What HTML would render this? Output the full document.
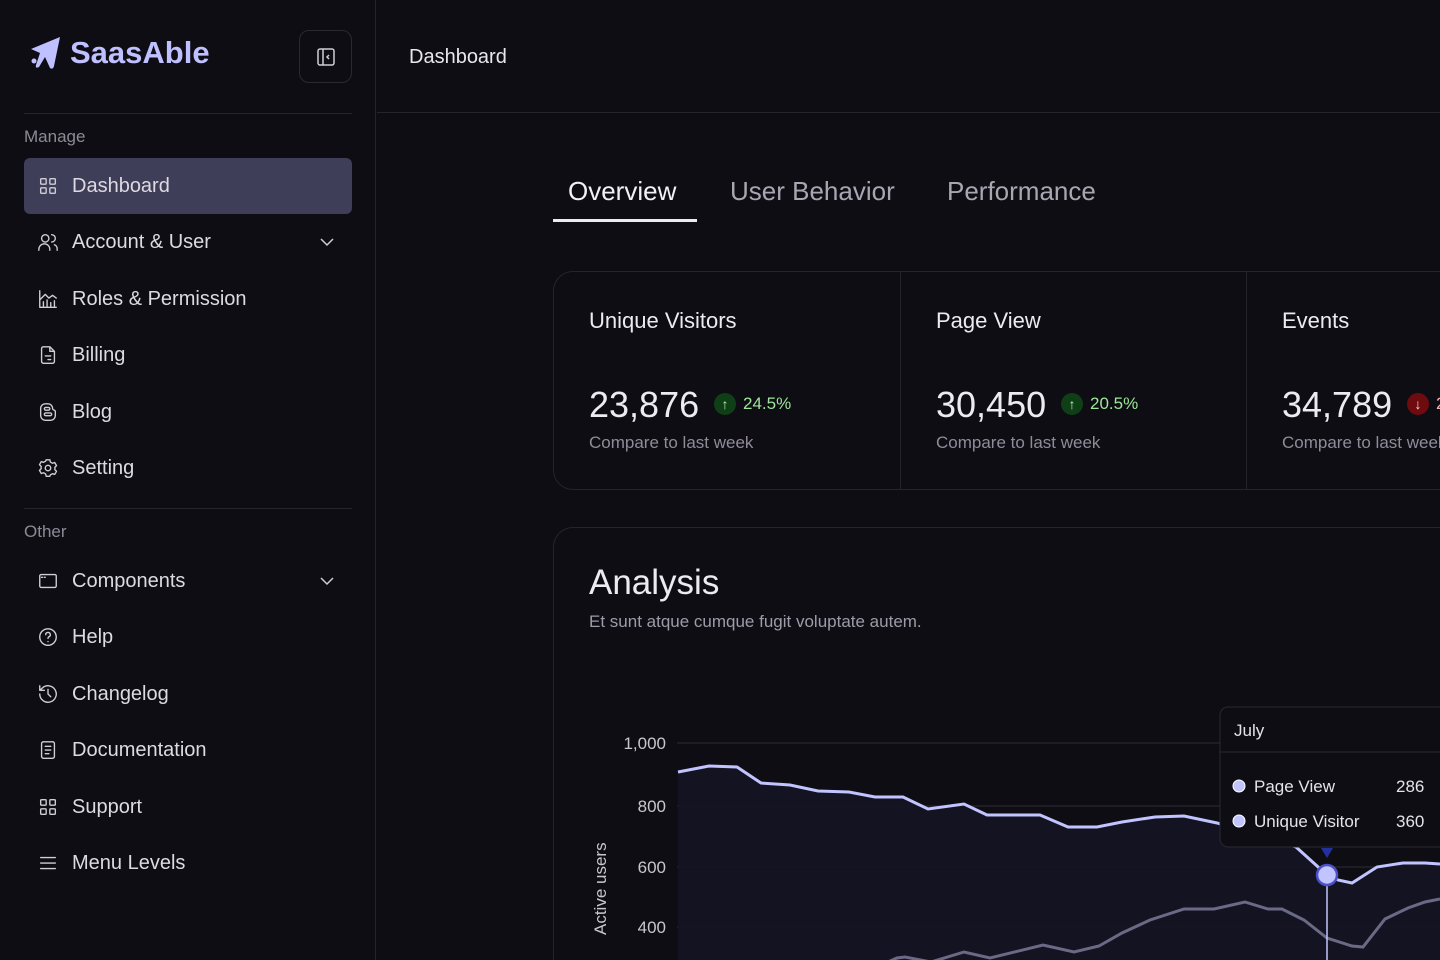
<!DOCTYPE html>
<html style="overflow:hidden;height:960px"><head><meta charset="utf-8"><style>
*{box-sizing:border-box;margin:0;padding:0}
body{width:1440px;height:960px;overflow:hidden;background:#0f0d14;font-family:"Liberation Sans",sans-serif;color:#e6e4ec;position:relative}
.sb{position:absolute;left:0;top:0;width:376px;height:960px;border-right:1px solid #25232c}
.logo{position:absolute;left:28px;top:35px;display:flex;align-items:center;gap:8px;color:#bfc0ff;font-weight:bold;font-size:31px}
.tog{position:absolute;left:299px;top:30px;width:53px;height:53px;border:1px solid #2a2831;border-radius:10px}
.hr{position:absolute;left:24px;width:328px;height:1px;background:#25232c}
.sec{position:absolute;left:24px;font-size:17px;color:#8d8a95}
.it{position:absolute;left:24px;width:328px;height:56px;border-radius:6px;display:flex;align-items:center;padding-left:13px;font-size:20px;color:#dcdae2}
.it svg.ic{width:22px;height:22px;margin-right:13px;fill:none;stroke:#cfcdd6;stroke-width:1.5;stroke-linecap:round;stroke-linejoin:round}
.it.act{background:#3f3e58}
.chev{position:absolute;left:296px;top:22px;width:14px;height:12px}
.top{position:absolute;left:377px;top:0;right:0;height:113px;border-bottom:1px solid #25232c}
.top span{position:absolute;left:32px;top:46px;font-size:20px;color:#e8e6ee}
.tab{position:absolute;top:176px;font-size:26px;color:#a9a6b2}
.card{position:absolute;left:553px;top:271px;width:920px;height:219px;border:1px solid #25232c;border-radius:20px}
.col{position:absolute;top:0;height:217px;width:346px}
.col h3{position:absolute;left:35px;top:36px;font-weight:normal;font-size:22px;color:#ecebf1}
.col .n{position:absolute;left:35px;top:112px;font-size:36px;color:#ecebf1}
.col .c{position:absolute;left:35px;top:161px;font-size:17px;color:#8f8c98}
.bdg{position:absolute;top:121px;width:22px;height:22px;border-radius:50%;display:flex;align-items:center;justify-content:center;font-size:14px}
.pct{position:absolute;top:122px;font-size:17px;color:#9ce79a}
.an{position:absolute;left:553px;top:527px;width:920px;height:433px;border:1px solid #25232c;border-bottom:none;border-radius:20px 20px 0 0;overflow:hidden}
</style></head><body>
<div class="sb">
 <div class="logo"><svg width="34" height="36" viewBox="0 0 34 36"><path d="M32 2 L3 14 L12 18 L8 30 Q7 34 11 32 L17 22 L22 33 Q25 35 26 31 Z" fill="#bfc0ff"/><circle cx="6" cy="26" r="2.5" fill="#bfc0ff"/></svg><span>SaasAble</span></div>
 <div class="tog"><svg width="53" height="53" viewBox="0 0 53 53" fill="none" stroke="#cfcdd6" stroke-width="1.5"><rect x="18" y="18" width="16" height="16" rx="2"/><path d="M23 18v16M29 24l-2 2 2 2"/></svg></div>
 <div class="hr" style="top:113px"></div>
 <div class="sec" style="top:127px">Manage</div>
 <div class="it act" style="top:158px"><svg class="ic" viewBox="0 0 24 24"><rect x="4" y="4" width="6" height="6" rx="1"/><rect x="14" y="4" width="6" height="6" rx="1"/><rect x="4" y="14" width="6" height="6" rx="1"/><rect x="14" y="14" width="6" height="6" rx="1"/></svg>Dashboard</div>
 <div class="it" style="top:214px"><svg class="ic" viewBox="0 0 24 24"><circle cx="9" cy="8" r="4"/><path d="M2 21v-1a6 6 0 0 1 12 0v1M16 4a4 4 0 0 1 0 8M19 15a5 5 0 0 1 3 5v1"/></svg>Account &amp; User<svg class="chev" viewBox="0 0 14 12" fill="none" stroke="#cfcdd6" stroke-width="1.5"><path d="M1 3l6 6 6-6"/></svg></div>
 <div class="it" style="top:271px"><svg class="ic" viewBox="0 0 24 24"><path d="M3 3v18h18M7 20v-5M11 20v-7M15 20v-4M19 20v-6M4 12l5-5 4 4 4-3 4 3"/></svg>Roles &amp; Permission</div>
 <div class="it" style="top:327px"><svg class="ic" viewBox="0 0 24 24"><path d="M14 3H7a2 2 0 0 0-2 2v14a2 2 0 0 0 2 2h10a2 2 0 0 0 2-2V8z M14 3v5h5M9 13h6M12 17h3"/></svg>Billing</div>
 <div class="it" style="top:384px"><svg class="ic" viewBox="0 0 24 24"><path d="M4 8a5 5 0 0 1 5-5h3a5 5 0 0 1 5 5 2 2 0 0 0 2 2 2 2 0 0 1 1 2v4a5 5 0 0 1-5 5H9a5 5 0 0 1-5-5z"/><rect x="8" y="7" width="6" height="3" rx="1.5"/><rect x="8" y="13" width="8" height="3" rx="1.5"/></svg>Blog</div>
 <div class="it" style="top:440px"><svg class="ic" viewBox="0 0 24 24"><circle cx="12" cy="12" r="3"/><path d="M10 3h4l.6 2.5 2.3 1.3 2.4-.8 2 3.4-1.8 1.8v2.6l1.8 1.8-2 3.4-2.4-.8-2.3 1.3L14 21h-4l-.6-2.5-2.3-1.3-2.4.8-2-3.4 1.8-1.8v-2.6L2.7 8.4l2-3.4 2.4.8 2.3-1.3z"/></svg>Setting</div>
 <div class="hr" style="top:508px"></div>
 <div class="sec" style="top:522px">Other</div>
 <div class="it" style="top:553px"><svg class="ic" viewBox="0 0 24 24"><rect x="3" y="5" width="18" height="14" rx="1.5"/><path d="M5 8h1M8 8h1"/></svg>Components<svg class="chev" viewBox="0 0 14 12" fill="none" stroke="#cfcdd6" stroke-width="1.5"><path d="M1 3l6 6 6-6"/></svg></div>
 <div class="it" style="top:609px"><svg class="ic" viewBox="0 0 24 24"><circle cx="12" cy="12" r="9"/><path d="M9.5 9.5a2.5 2.5 0 1 1 3.5 2.3c-.7.3-1 .9-1 1.7M12 17v.1"/></svg>Help</div>
 <div class="it" style="top:666px"><svg class="ic" viewBox="0 0 24 24"><path d="M3 12a9 9 0 1 0 3-6.7L3 8M3 3v5h5M12 7v5l3 3"/></svg>Changelog</div>
 <div class="it" style="top:722px"><svg class="ic" viewBox="0 0 24 24"><rect x="5" y="3" width="14" height="18" rx="2"/><path d="M9 8h6M9 12h6M9 16h4"/></svg>Documentation</div>
 <div class="it" style="top:779px"><svg class="ic" viewBox="0 0 24 24"><rect x="4" y="4" width="6" height="6" rx="1"/><rect x="14" y="4" width="6" height="6" rx="1"/><rect x="4" y="14" width="6" height="6" rx="1"/><rect x="14" y="14" width="6" height="6" rx="1"/></svg>Support</div>
 <div class="it" style="top:835px"><svg class="ic" viewBox="0 0 24 24"><path d="M4 6h16M4 12h16M4 18h16"/></svg>Menu Levels</div>
</div>
<div class="top"><span>Dashboard</span></div>
<div class="tab" style="left:568px;color:#f1f0f5">Overview</div>
<div style="position:absolute;left:553px;top:219px;width:144px;height:3px;background:#ecebf1"></div>
<div class="tab" style="left:730px">User Behavior</div>
<div class="tab" style="left:947px">Performance</div>
<div class="card">
 <div class="col" style="left:0"><h3>Unique Visitors</h3><div class="n">23,876</div><div class="bdg" style="left:160px;background:#0f3f17;color:#b5f0b0">↑</div><div class="pct" style="left:189px">24.5%</div><div class="c">Compare to last week</div></div>
 <div class="col" style="left:346px;border-left:1px solid #25232c"><h3>Page View</h3><div class="n">30,450</div><div class="bdg" style="left:160px;background:#0f3f17;color:#b5f0b0">↑</div><div class="pct" style="left:189px">20.5%</div><div class="c">Compare to last week</div></div>
 <div class="col" style="left:692px;border-left:1px solid #25232c"><h3>Events</h3><div class="n">34,789</div><div class="bdg" style="left:160px;background:#6e0b0f;color:#ffd6d6">↓</div><div class="pct" style="left:189px;color:#f3b0b0">2</div><div class="c">Compare to last week</div></div>
</div>
<div class="an">
 <div style="position:absolute;left:35px;top:35px;font-size:35px;color:#ecebf1">Analysis</div>
 <div style="position:absolute;left:35px;top:84px;font-size:17px;color:#9e9ba8">Et sunt atque cumque fugit voluptate autem.</div>
</div>
<svg style="position:absolute;left:0;top:0" width="1440" height="960" viewBox="0 0 1440 960">
 <g font-family="Liberation Sans" font-size="17" fill="#c8c6cf" text-anchor="end">
  <text x="666" y="749">1,000</text><text x="666" y="812">800</text><text x="666" y="873">600</text><text x="666" y="933">400</text>
 </g>
 <text transform="translate(606,935) rotate(-90)" font-family="Liberation Sans" font-size="17" fill="#c8c6cf">Active users</text>
 <g stroke="#24232c" stroke-width="1.5"><path d="M677 743H1440M677 806H1440M677 867H1440M677 927H1440"/></g>
 <path d="M678 772L709 766L737 767L761 783L790 785L818 791L849 792L875 797L903 797L928 809L964 804L987 815L1040 815L1068 827L1097 827L1122 822L1155 817L1184 816L1217 823L1296 847L1327 875L1338 880L1352 883L1377 867L1403 863L1425 863L1440 864V960H678Z" fill="#151422" opacity=".9"/>
 <path d="M678 772L709 766L737 767L761 783L790 785L818 791L849 792L875 797L903 797L928 809L964 804L987 815L1040 815L1068 827L1097 827L1122 822L1155 817L1184 816L1217 823L1296 847L1327 875L1338 880L1352 883L1377 867L1403 863L1425 863L1440 864" fill="none" stroke="#c2c4ff" stroke-width="3"/>
 <path d="M870 970L897 958L905 957L931 962L964 952L990 958L1043 945L1074 952L1099 946L1122 933L1150 920L1184 909L1214 909L1245 902L1268 909L1282 909L1304 920L1327 938L1352 946L1363 947L1385 919L1408 908L1425 902L1440 899" fill="none" stroke="#6b6a86" stroke-width="3"/>
 <path d="M1327 875V960" stroke="#c2c4ff" stroke-width="1.5"/>
 <path d="M1321 848h12l-6 10z" fill="#2330a0"/>
 <ellipse cx="1327" cy="875" rx="10" ry="10" fill="#c2c4ff" stroke="#4a50c8" stroke-width="2.5"/>
 <rect x="1220" y="707" width="240" height="140" rx="8" fill="#0f0d14" stroke="#2a2831"/>
 <path d="M1220 752H1440" stroke="#2a2831"/>
 <g font-family="Liberation Sans" font-size="17" fill="#e4e2ea">
  <text x="1234" y="736">July</text>
  <circle cx="1239" cy="786" r="6" fill="#c2c4ff" stroke="#fff" stroke-width="1"/>
  <text x="1254" y="792">Page View</text><text x="1396" y="792">286</text>
  <circle cx="1239" cy="821" r="6" fill="#c2c4ff" stroke="#fff" stroke-width="1"/>
  <text x="1254" y="827">Unique Visitor</text><text x="1396" y="827">360</text>
 </g>
</svg>
</body></html>
